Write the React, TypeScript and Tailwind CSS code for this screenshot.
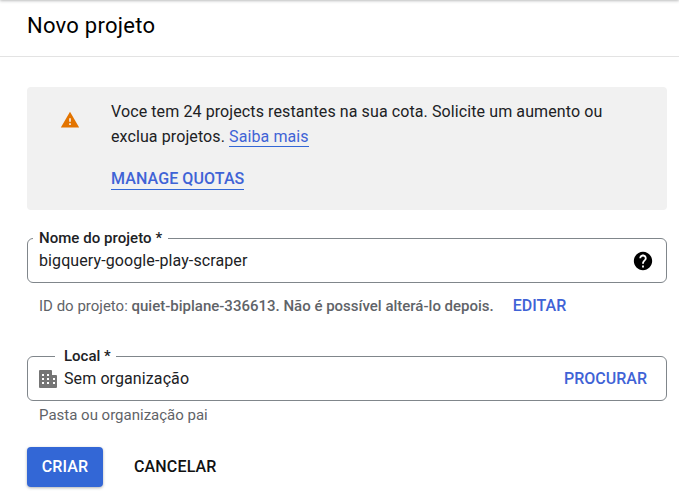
export default function App() {
  return (
    <div className="relative h-[495px] w-[679px] overflow-hidden bg-white font-['Roboto',sans-serif] text-[#202124]">
      {/* shadow from the bar above the page */}
      <div className="absolute inset-x-0 top-[-4px] h-[4px] shadow-[0_1px_3px_rgba(60,64,67,0.35)]" />

      <header className="flex h-[57px] items-center border-b border-[#e3e3e3] pl-[27px] pb-[4px]">
        <h1 className="text-[22px] font-normal leading-[28px] tracking-[0.25px] text-black">Novo projeto</h1>
      </header>

      <main className="pl-[27px] pr-[12px] pt-[30px]">
        {/* Quota warning */}
        <section className="flex h-[123px] rounded-[4px] bg-[#f1f1f1] pt-[12px]">
          <div className="flex w-[84px] shrink-0 justify-center pt-[11px] pl-[2px]">
            <svg viewBox="0 0 24 24" className="h-[20px] w-[20px] fill-[#e37400]">
              <path d="M1 21h22L12 2 1 21zm12-3h-2v-2h2v2zm0-4h-2v-4h2v4z" />
            </svg>
          </div>
          <div className="text-[16px] leading-[25px] tracking-[0.1px]">
            <p className="w-[510px]">
              Voce tem 24 projects restantes na sua cota. Solicite um aumento ou exclua projetos.{" "}
              <a className="border-b border-[#3367d6] text-[#3f63d6]">Saiba mais</a>
            </p>
            <a className="mt-[20px] inline-block border-b border-[#3367d6] text-[16px] leading-[20px] font-medium text-[#3f63d6]">
              MANAGE QUOTAS
            </a>
          </div>
        </section>

        {/* Project name */}
        <fieldset className="mt-[20px] flex h-[53px] items-center justify-between rounded-[6px] border border-[#80868b] pr-[12px] pl-[11px] pb-[7px]">
          <legend className="ml-[-6px] px-[6px] text-[15px] leading-[16px] font-medium tracking-[0.05px] text-[#202124]">
            Nome do projeto *
          </legend>
          <span className="text-[16px] leading-[20px] tracking-[0.1px] text-[#202124]">bigquery-google-play-scraper</span>
          <svg viewBox="0 0 24 24" className="h-[22px] w-[22px] fill-black">
            <path d="M12 2C6.48 2 2 6.48 2 12s4.48 10 10 10 10-4.48 10-10S17.52 2 12 2zm1 17h-2v-2h2v2zm2.07-7.75l-.9.92C13.45 12.9 13 13.5 13 15h-2v-.5c0-1.1.45-2.1 1.17-2.83l1.24-1.26c.37-.36.59-.86.59-1.41 0-1.1-.9-2-2-2s-2 .9-2 2H8c0-2.21 1.79-4 4-4s4 1.79 4 4c0 .88-.36 1.68-.93 2.25z" />
          </svg>
        </fieldset>

        <div className="mt-[13px] flex items-center pl-[12px] text-[15px] leading-[20px] text-[#5f6368]">
          <span>
            ID do projeto: <span className="font-medium">quiet-biplane-336613.</span>{" "}
            <span className="font-medium">Não é possível alterá-lo depois.</span>
          </span>
          <span className="ml-[19px] text-[16px] font-medium text-[#3f63d6]">EDITAR</span>
        </div>

        {/* Location */}
        <fieldset className="mt-[32px] flex h-[53px] items-center justify-between rounded-[6px] border border-[#80868b] pr-[19px] pl-[11px] pb-[7px]">
          <legend className="ml-[16px] pr-[5px] pl-[9px] text-[15px] leading-[16px] font-medium text-[#202124]">
            Local *
          </legend>
          <div className="flex items-center gap-[7px]">
            <svg viewBox="0 0 18 18" className="h-[18px] w-[18px] fill-[#757575]">
              <path
                fillRule="evenodd"
                d="M0 1a1 1 0 0 1 1-1h11a1 1 0 0 1 1 1v4h4a1 1 0 0 1 1 1v11a1 1 0 0 1-1 1H1a1 1 0 0 1-1-1V1zm3 3v2h2V4H3zm5 0v2h2V4H8zM3 8v2h2V8H3zm5 0v2h2V8H8zm6 0v2h2V8h-2zM3 12v2h2v-2H3zm5 0v2h2v-2H8zm6 0v2h2v-2h-2z"
              />
            </svg>
            <span className="text-[16px] leading-[20px] tracking-[0.1px] text-[#202124]">Sem organização</span>
          </div>
          <span className="text-[16px] leading-[20px] font-medium text-[#3f63d6]">PROCURAR</span>
        </fieldset>

        <p className="mt-[4px] pl-[12px] text-[15px] leading-[20px] text-[#5f6368]">Pasta ou organização pai</p>

        {/* Actions */}
        <div className="mt-[22px] flex items-center gap-[31px]">
          <button className="h-[40px] w-[76px] rounded-[4px] bg-[#3367d6] text-[16px] font-medium tracking-[0.1px] text-white shadow-[0_1px_3px_rgba(60,64,67,0.4)]">
            CRIAR
          </button>
          <button className="text-[16px] font-medium tracking-[0.15px] text-[#111111]">CANCELAR</button>
        </div>
      </main>
    </div>
  );
}
